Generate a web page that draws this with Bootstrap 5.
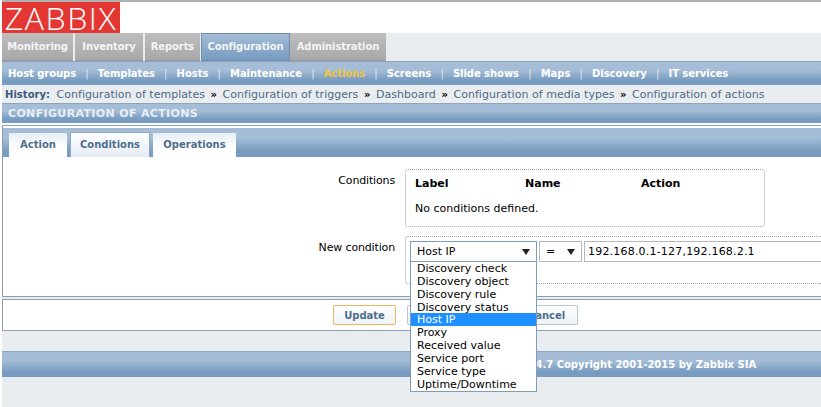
<!DOCTYPE html>
<html lang="en"><head><meta charset="utf-8"><title>Configuration of actions</title>
<link href="https://cdn.jsdelivr.net/npm/bootstrap@5.3.0/dist/css/bootstrap.min.css" rel="stylesheet">
<style>
html{height:100%;background:#fff}
body{min-height:100%;margin-left:2px;background:#e9edf0;font:11px/13px "DejaVu Sans",sans-serif;color:#000}
.zb-head{background:#fff;border-top:2px solid #b0b0b0;height:33px}
.zb-logo{width:118px;height:31px;background:#e33734;color:#fff;font:300 32px/31px "Open Sans",sans-serif;text-align:center;letter-spacing:1.6px}
.zb-main{height:28px;gap:1px;font-size:10px}
.zb-main a{display:block;height:28px;line-height:28px;text-align:center;font-weight:700;letter-spacing:-.1px;color:#f4f4f4;text-decoration:none;background:linear-gradient(#bdbdbd,#a9a9a9);border-bottom:1px solid #999}
.zb-main a.on{background:linear-gradient(#a4bcd6,#769bc0);border:1px solid #6f8eae;line-height:26px;margin-right:-1px}
.zb-w1{width:71px;margin-right:1px}.zb-w2{width:68px;margin-right:1px}.zb-w3{width:55px}.zb-w4{width:89px}.zb-w5{width:96px}
.zb-bar{background:linear-gradient(#a5bdd6 0,#a5bdd6 35%,#779cc0 80%,#779cc0);color:#fff;font-weight:700;font-size:10px}
.zb-sub{height:24px;border-top:1px solid #8ea5bd;line-height:23px;padding-left:6px;letter-spacing:-.05px}
.zb-sub a{color:#fff;text-decoration:none}
.zb-sub a.cur{color:#f2c53d}
.zb-sub i{font-style:normal;font-weight:400;color:#dfe7ef;margin:0 9.2px}
.zb-hist{height:18px;line-height:19px;padding-left:3px;color:#4f6a85;white-space:nowrap;letter-spacing:.03px}
.zb-hist b{color:#3c5a7a;font-size:10px;margin-right:3px}.zb-hist i{font-style:normal;color:#000;font-weight:700;font-size:10px;margin:0 2px}
.zb-title{height:20px;border-top:1px solid #8ea5bd;line-height:19px;padding-left:6px;color:#e8eef5;font-size:11px;letter-spacing:.35px}
.zb-rule{height:3px;background:#fff;border-bottom:1px solid #8fa3b8}
.zb-panel{background:#fff;margin:0 0 2px;height:171px;padding-top:2px;border-left:1px solid #8a9db2;border-bottom:1px solid #8a9db2}
.zb-tabs{height:29px;padding-left:6px;gap:3px;align-items:flex-end}
.zb-tab{height:24px;line-height:24px;text-align:center;font-weight:700;color:#4e6d8c;background:linear-gradient(#e6eef5,#fff 60%)}
.zb-tab.on{height:25px;line-height:24px;background:linear-gradient(#fff,#e4ecf4);border:1px solid #93a9c0;border-bottom:0}
.zb-t-a{width:58px}.zb-t-c{width:80px}.zb-t-o{width:83px}
.zb-rows{display:grid;grid-template-columns:392px 1fr;padding-top:12px;row-gap:9px}
.zb-lab{text-align:right;padding-top:5px;letter-spacing:-.15px}
.zb-box{border:1px dotted #9aa5b2;border-radius:3px;margin-left:10px}
.zb-t1{width:360px;height:58px;padding:7px 9px}
.zb-t1 b{display:inline-block}
.zb-c1{width:110px}.zb-c2{width:116px}
.zb-t2{height:48px;padding:4px 0 4px 4px;gap:2px;border-right:0;border-radius:3px 0 0 3px}
.zb-sel{height:21px;line-height:19px;padding-left:6px;border:1px solid #7f9db9;background:#fff;position:relative}
.zb-sel.zb-s1{width:127px}
.zb-sel.zb-s2{width:43px;border-color:#b8b8b8}
.zb-sel::after{content:"";position:absolute;right:6px;top:7px;border:4px solid transparent;border-top:6px solid #222;border-bottom:0}
.zb-ip{height:21px;line-height:19px;border:1px solid #b8b8b8;border-right:0;padding-left:3px;letter-spacing:.2px;white-space:nowrap}
.zb-menu{position:absolute;left:410px;top:261px;width:127px;background:#fff;border:1px solid #7f9db9;z-index:5;border-radius:0}
.zb-menu .list-group-item{border:0;padding:0 0 0 6px;height:13px;line-height:14px;font-size:11px;color:#000;background:#fff;border-radius:0}
.zb-menu .list-group-item.active{background:#1e90ff;color:#fff}
.zb-acts{background:#fff;height:32px;border:1px solid #8a9db2;border-right:0;gap:11px;padding-left:330px;padding-top:5px}
.zb-btn{height:20px;padding:0;font:700 10px/17px "DejaVu Sans",sans-serif;color:#4e6d8c;background:linear-gradient(#fff,#eef2f6);border:1px solid #b8c6d4;border-radius:2px;text-align:center}
.zb-btn.pri{border-color:#e8b860}
.zb-b1{width:63px}.zb-b2{width:97px}.zb-b3{width:63px}
.zb-foot{height:26px;margin-top:20px;border-top:1px solid #8ea5bd;line-height:25px;padding-left:481px;white-space:nowrap}
</style></head><body>
<div class="zb-head"><div class="zb-logo">ZABBIX</div></div>
<div class="zb-main d-flex">
<a href="#" class="zb-w1">Monitoring</a><a href="#" class="zb-w2">Inventory</a><a href="#" class="zb-w3">Reports</a><a href="#" class="on zb-w4">Configuration</a><a href="#" class="zb-w5">Administration</a>
</div>
<div class="zb-bar zb-sub d-flex">
<a href="#">Host groups</a><i>|</i><a href="#">Templates</a><i>|</i><a href="#">Hosts</a><i>|</i><a href="#">Maintenance</a><i>|</i><a href="#" class="cur">Actions</a><i>|</i><a href="#">Screens</a><i>|</i><a href="#">Slide shows</a><i>|</i><a href="#">Maps</a><i>|</i><a href="#">Discovery</a><i>|</i><a href="#">IT services</a>
</div>
<div class="zb-hist"><b>History:</b> Configuration of templates <i>»</i> Configuration of triggers <i>»</i> Dashboard <i>»</i> Configuration of media types <i>»</i> Configuration of actions</div>
<div class="zb-bar zb-title">CONFIGURATION OF ACTIONS</div>
<div class="zb-rule"></div>
<div class="zb-panel">
<div class="zb-bar zb-tabs d-flex">
<div class="zb-tab zb-t-a">Action</div><div class="zb-tab on zb-t-c">Conditions</div><div class="zb-tab zb-t-o">Operations</div>
</div>
<div class="zb-rows">
<div class="zb-lab">Conditions</div>
<div class="zb-box zb-t1">
<div class="d-flex"><b class="zb-c1">Label</b><b class="zb-c2">Name</b><b>Action</b></div>
<div class="mt-2 pt-1">No conditions defined.</div>
</div>
<div class="zb-lab">New condition</div>
<div class="zb-box zb-t2 d-flex align-items-start">
<div class="zb-sel zb-s1">Host IP</div>
<div class="zb-sel zb-s2">=</div>
<div class="zb-ip flex-fill">192.168.0.1-127,192.168.2.1</div>
</div>
</div>
</div>
<div class="zb-acts d-flex">
<button class="btn zb-btn pri zb-b1">Update</button>
<button class="btn zb-btn zb-b2" aria-label="Clone"></button>
<button class="btn zb-btn zb-b3">Cancel</button>
</div>
<div class="zb-bar zb-foot">Zabbix 2.4.7 Copyright 2001-2015 by Zabbix SIA</div>
<div class="list-group zb-menu">
<div class="list-group-item">Discovery check</div>
<div class="list-group-item">Discovery object</div>
<div class="list-group-item">Discovery rule</div>
<div class="list-group-item">Discovery status</div>
<div class="list-group-item active">Host IP</div>
<div class="list-group-item">Proxy</div>
<div class="list-group-item">Received value</div>
<div class="list-group-item">Service port</div>
<div class="list-group-item">Service type</div>
<div class="list-group-item">Uptime/Downtime</div>
</div>
<script src="https://cdn.jsdelivr.net/npm/bootstrap@5.3.0/dist/js/bootstrap.bundle.min.js"></script>
</body></html>
